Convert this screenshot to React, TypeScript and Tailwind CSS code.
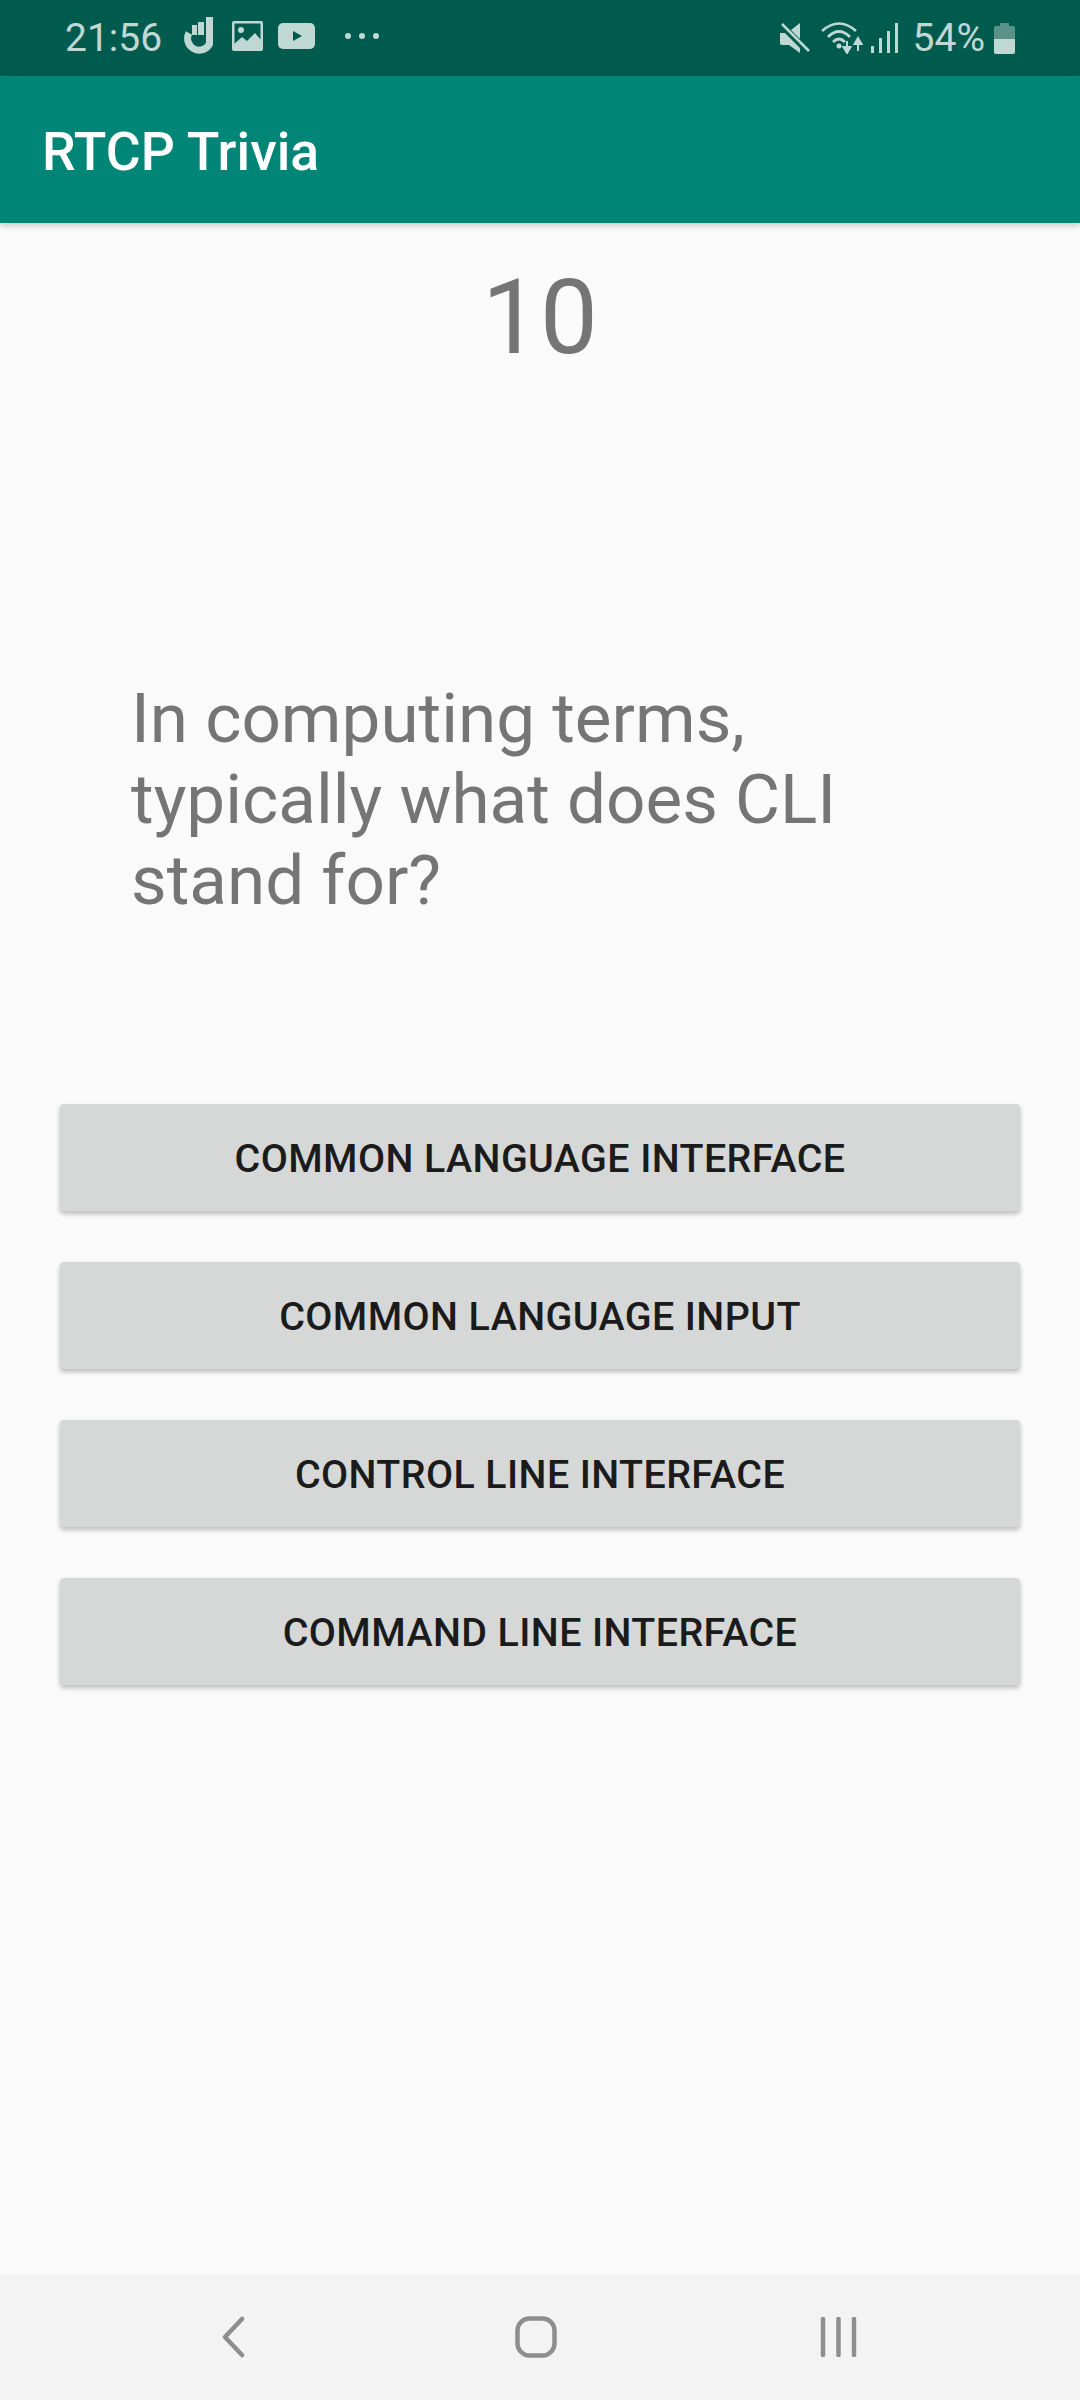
const answers = [
  'COMMON LANGUAGE INTERFACE',
  'COMMON LANGUAGE INPUT',
  'CONTROL LINE INTERFACE',
  'COMMAND LINE INTERFACE',
];

function StatusLeftIcons() {
  return (
    <div className="flex items-center">
      {/* hand */}
      <svg width="30" height="42" viewBox="0 0 30 42" className="ml-[21px]">
        <path d="M6 16 A11.5 11.5 0 1 0 26.5 27 L26.5 0" fill="none" stroke="#c0d8d4" strokeWidth="7" />
        <path d="M9 8 H14 V18 H9 Z M15 5 H21 V18 H15 Z" fill="#c0d8d4" />
      </svg>
      {/* picture */}
      <svg width="31" height="30" viewBox="0 0 31 30" className="ml-[19px] -mt-[4px]">
        <rect x="0" y="0" width="31" height="30" rx="2" fill="#c0d8d4" />
        <rect x="2.5" y="2.5" width="26" height="25" fill="#005b4f" />
        <circle cx="9" cy="9" r="3" fill="#c0d8d4" />
        <path d="M2 23 L10 16 L15 20 L23 12 L29 19 L29 29 L2 29 Z" fill="#c0d8d4" />
      </svg>
      {/* youtube */}
      <svg width="37" height="26" viewBox="0 0 37 26" className="ml-[15px] -mt-[4px]">
        <rect width="37" height="26" rx="5" fill="#c0d8d4" />
        <path d="M15 8 L24 13 L15 18 Z" fill="#005b4f" />
      </svg>
      {/* more */}
      <div className="flex gap-[8px] ml-[30px] -mt-[4px]">
        <span className="w-[6px] h-[6px] rounded-full bg-[#c0d8d4]" />
        <span className="w-[6px] h-[6px] rounded-full bg-[#c0d8d4]" />
        <span className="w-[6px] h-[6px] rounded-full bg-[#c0d8d4]" />
      </div>
    </div>
  );
}

function StatusRightIcons() {
  return (
    <div className="flex items-center">
      {/* muted speaker */}
      <svg width="30" height="32" viewBox="0 0 30 32">
        <path d="M0 11 L5 11 L20 26 L20 31 L9 23 L2 23 Q0 23 0 21 Z" fill="#c0d8d4" />
        <path d="M11 8 L20 1 L20 17 Z" fill="#c0d8d4" />
        <path d="M2 2 L29 29" stroke="#c0d8d4" strokeWidth="2.5" />
      </svg>
      {/* wifi */}
      <svg width="42" height="32" viewBox="0 0 42 32" className="ml-[11px]">
        <path d="M1 9 Q18 -6 35 9" fill="none" stroke="#c0d8d4" strokeWidth="2.6" />
        <path d="M7 15 Q18 4 29 15" fill="none" stroke="#c0d8d4" strokeWidth="2.6" />
        <path d="M12 20 Q18 14 24 20" fill="none" stroke="#c0d8d4" strokeWidth="2.6" />
        <circle cx="18" cy="24" r="2.5" fill="#c0d8d4" />
        <path d="M26 19 L26 28 M22.5 25 L26 31 L29.5 25 Z" stroke="#c0d8d4" strokeWidth="2" fill="#c0d8d4" />
        <path d="M37 29 L37 20 M33.5 22 L37 16 L40.5 22 Z" stroke="#c0d8d4" strokeWidth="2" fill="#c0d8d4" />
      </svg>
      {/* signal */}
      <svg width="28" height="30" viewBox="0 0 28 30" className="ml-[8px]">
        <rect x="0" y="23" width="3" height="7" fill="#c0d8d4" />
        <rect x="8" y="15" width="3" height="15" fill="#c0d8d4" />
        <rect x="16" y="8" width="3" height="22" fill="#c0d8d4" />
        <rect x="24" y="0" width="3" height="30" fill="#c0d8d4" />
      </svg>
      <span className="ml-[14px] text-[39px] leading-none text-[#c0d8d4]">54%</span>
      {/* battery */}
      <svg width="21" height="31" viewBox="0 0 21 31" className="ml-[9px]">
        <path d="M6 0 H15 V3 H19 Q21 3 21 5 V16 H0 V5 Q0 3 2 3 H6 Z" fill="#5b9186" />
        <path d="M0 16 H21 V29 Q21 31 19 31 H2 Q0 31 0 29 Z" fill="#c0d8d4" />
      </svg>
    </div>
  );
}

export default function App() {
  return (
    <div className="w-[1080px] h-[2400px] flex flex-col bg-[#fafafa] font-['Roboto',sans-serif]">
      <div className="h-[76px] shrink-0 bg-[#005b4f] flex items-center justify-between pl-[65px] pr-[65px]">
        <div className="flex items-center">
          <span className="text-[39px] leading-none text-[#c0d8d4]">21:56</span>
          <StatusLeftIcons />
        </div>
        <StatusRightIcons />
      </div>

      <header className="h-[147px] shrink-0 bg-[#008577] flex items-center pl-[42px] pt-[5px] shadow-[0_3px_6px_rgba(0,0,0,0.18)] z-10">
        <h1 className="text-[53.5px] font-medium leading-none text-white">RTCP Trivia</h1>
      </header>

      <main className="flex-1 flex flex-col">
        <p className="mt-[36px] text-center text-[103px] leading-[117px] text-[#757575]">10</p>

        <p className="mt-[302px] ml-[131px] w-[800px] text-[69.2px] leading-[81px] text-[#757575]">
          In computing terms, typically what does CLI stand for?
        </p>

        <div className="mt-[183px] mx-[60px] flex flex-col gap-[51px]">
          {answers.map((answer) => (
            <button
              key={answer}
              className="h-[107px] w-full rounded-[4px] bg-[#d6d7d7] pt-[2px] text-[39.4px] font-medium tracking-[0.4px] text-[#1b1b1b] shadow-[0_3px_5px_rgba(0,0,0,0.25)]"
            >
              {answer}
            </button>
          ))}
        </div>
      </main>

      <nav className="h-[126px] shrink-0 bg-[#f3f3f3] flex items-center">
        <svg width="26" height="42" viewBox="0 0 26 42" className="ml-[221px] -mt-[1px]">
          <path d="M21 3 L4 21 L21 39" fill="none" stroke="#8e8e8e" strokeWidth="4.5" strokeLinecap="round" strokeLinejoin="round" />
        </svg>
        <svg width="42" height="42" viewBox="0 0 42 42" className="ml-[268px]">
          <rect x="2.5" y="2.5" width="37" height="37" rx="12" fill="none" stroke="#8e8e8e" strokeWidth="4.5" />
        </svg>
        <svg width="38" height="40" viewBox="0 0 38 40" className="ml-[263px]">
          <path d="M3 2 V38 M18.5 2 V38 M34 2 V38" stroke="#8e8e8e" strokeWidth="4.5" strokeLinecap="round" />
        </svg>
      </nav>
    </div>
  );
}
